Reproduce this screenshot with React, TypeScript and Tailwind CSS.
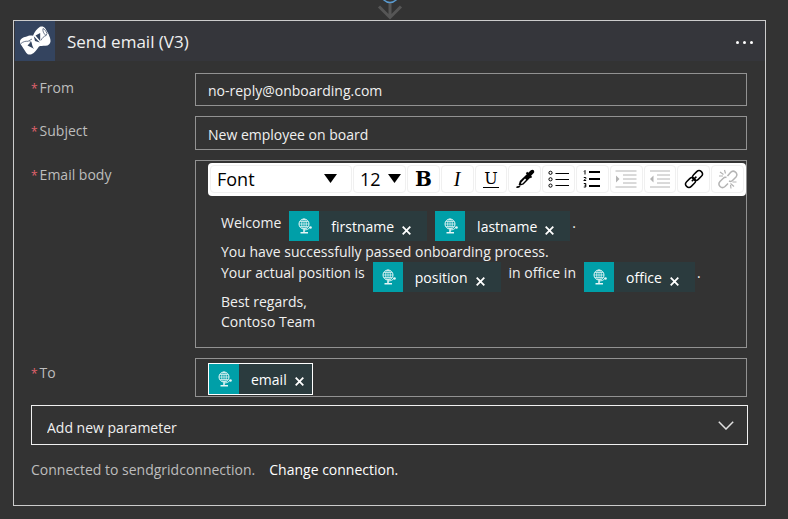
import type { ReactNode } from "react";

function Globe() {
  return (
    <svg viewBox="0 0 14 16" className="h-4 w-3.5" fill="none" stroke="#e6f6f6" strokeWidth="1" aria-hidden="true">
      <circle cx="6" cy="6" r="5" />
      <ellipse cx="6" cy="6" rx="2.3" ry="5" strokeWidth="0.8" />
      <path d="M1 6h10M2 3.500h8M2 8.500h8M6 1v10" strokeWidth="0.7" />
      <path d="M6 11.500v2.500M2.500 14.700h7.500" strokeWidth="1.500" />
      <path d="M6 12c3 0 5-1 6-3" strokeWidth="0.9" />
      <circle cx="12.500" cy="9.500" r="1.300" fill="#e6f6f6" stroke="none" />
    </svg>
  );
}

function Cross() {
  return (
    <svg viewBox="0 0 9 9" className="size-[9px]" stroke="#fff" strokeWidth="1.800" aria-hidden="true">
      <path d="M0.7 0.7l7.6 7.6M8.3 0.7L0.7 8.3" />
    </svg>
  );
}

function Token({ name, selected = false }: { name: string; selected?: boolean }) {
  return (
    <span
      contentEditable={false}
      className={
        "inline-flex shrink-0 items-stretch bg-[#2b3b3e] text-white " +
        (selected ? "h-8 border border-white pr-2" : "h-[30px] pr-4")
      }
    >
      <span className="flex w-[30px] items-center justify-center bg-[#009fa8] pl-[2px]">
        <Globe />
      </span>
      <span className="ml-3 self-center pt-[2px] leading-5">{name}</span>
      <button
        type="button"
        aria-label={"Remove " + name}
        className={"ml-2 flex items-center " + (selected ? "pt-1" : "pt-2")}
      >
        <Cross />
      </button>
    </span>
  );
}

function Label({ id, htmlFor, children }: { id?: string; htmlFor?: string; children: ReactNode }) {
  return (
    <label id={id} htmlFor={htmlFor} className="w-[164px] shrink-0 pt-[5px] leading-5 text-[#bdbdbd]">
      <span className="mr-[2px] text-xs leading-5 text-[#e0626c]">*</span>
      {children}
    </label>
  );
}

function Tool({ label, disabled = false, children }: { label: string; disabled?: boolean; children: ReactNode }) {
  return (
    <button
      type="button"
      aria-label={label}
      disabled={disabled}
      className="flex h-[28px] min-w-0 flex-1 items-center justify-center rounded-sm border border-[#f0f0f0] text-black disabled:text-[#b4b4b4]"
    >
      {children}
    </button>
  );
}

function Triangle({ className }: { className: string }) {
  return (
    <svg viewBox="0 0 13 9" className={"pointer-events-none absolute top-2 h-[9px] w-[13px] " + className} aria-hidden="true">
      <path d="M0 0h13L6.5 9z" fill="#000" />
    </svg>
  );
}

function Toolbar() {
  return (
    <div role="toolbar" aria-label="Formatting" className="flex h-[33px] items-center gap-px rounded-sm bg-white px-[2px] pb-[2px] text-black">
      <div className="relative h-[28px] w-[142px] shrink-0 rounded-sm border border-[#f0f0f0]">
        <select aria-label="Font" className="h-full w-full appearance-none bg-transparent pt-px pl-1.5 text-lg leading-6 outline-none">
          <option>Font</option>
        </select>
        <Triangle className="right-[14px]" />
      </div>
      <div className="relative h-[28px] w-[53px] shrink-0 rounded-sm border border-[#f0f0f0]">
        <select aria-label="Font size" className="h-full w-full appearance-none bg-transparent pt-px pl-1.5 text-lg leading-6 outline-none">
          <option>12</option>
        </select>
        <Triangle className="right-1" />
      </div>
      <Tool label="Bold">
        <span className="font-['DejaVu_Serif',serif] text-xl leading-6 font-bold">B</span>
      </Tool>
      <Tool label="Italic">
        <span className="font-['Liberation_Serif',serif] text-xl leading-6 italic">I</span>
      </Tool>
      <Tool label="Underline">
        <span className="border-b border-black px-px font-['DejaVu_Serif',serif] text-base leading-[17px]">U</span>
      </Tool>
      <Tool label="Text color">
        <svg viewBox="0 0 20 20" className="size-5" aria-hidden="true">
          <path d="M12.3 4.800l3.400 3.400-7.200 7.200-3.900 1.400-1-.8 1.200-3.900z" fill="#000" />
          <path d="M10 9.500l1.200 1.200-3.700 3.700-1.500.6.500-1.700z" fill="#fff" />
          <path d="M10.800 4.200l5 5 1.300-1.300-1-1.200 2.600-2.600c1.600-2-.6-4.400-2.800-2.800l-2.700 2.500-1-1z" fill="#000" />
          <path d="M.8 18.300c1.200-1.300 3-1.500 4.700-.8-1 1.500-3.200 1.800-4.700.8z" fill="#000" />
        </svg>
      </Tool>
      <Tool label="Bulleted list">
        <svg viewBox="0 0 22 18" className="h-[18px] w-[22px]" fill="none" stroke="currentColor" aria-hidden="true">
          <circle cx="2.500" cy="2.800" r="1.600" />
          <circle cx="2.500" cy="9.300" r="1.600" />
          <circle cx="2.500" cy="15.600" r="1.600" />
          <path d="M7.500 3.500h13.500M7.500 9.500h13.500M7.500 15.500h13.500" />
        </svg>
      </Tool>
      <Tool label="Numbered list">
        <svg viewBox="0 0 18 18" className="size-[18px]" fill="none" stroke="currentColor" aria-hidden="true">
          <path d="M6 2h11M6 9h11M6 16h11" strokeWidth="2" />
          <path d="M1 1.500l1-1v4M.8 7.500h2v1l-2 2h2.400M.8 13.500h2v3.500h-2M1.500 15.200h1.500" />
        </svg>
      </Tool>
      <Tool label="Indent" disabled>
        <svg viewBox="0 0 22 18" className="h-[18px] w-[22px]" fill="none" stroke="currentColor" aria-hidden="true">
          <path d="M.5 1h21M8 5h13.500M8 9h13.500M8 13h13.500M.5 17h21" />
          <path d="M1 5.500l3.500 3.500L1 12.500z" fill="currentColor" stroke="none" />
        </svg>
      </Tool>
      <Tool label="Outdent" disabled>
        <svg viewBox="0 0 22 18" className="h-[18px] w-[22px]" fill="none" stroke="currentColor" aria-hidden="true">
          <path d="M1 1h20M8 5h13M8 9h13M8 13h13M1 17h20" />
          <path d="M4.500 5.500L1 9l3.500 3.500z" fill="currentColor" stroke="none" />
        </svg>
      </Tool>
      <Tool label="Insert link">
        <svg viewBox="0 0 20 20" className="size-5" fill="none" stroke="currentColor" strokeWidth="1.500" aria-hidden="true">
          <rect x="8" y="3.200" width="11" height="6.600" rx="3.300" transform="rotate(-45 13.500 6.500)" />
          <rect x="1" y="10.200" width="11" height="6.600" rx="3.300" transform="rotate(-45 6.500 13.500)" />
          <path d="M7.800 12.200l4.600-4.600" />
        </svg>
      </Tool>
      <Tool label="Remove link" disabled>
        <svg viewBox="0 0 20 20" className="size-5" fill="none" stroke="currentColor" strokeWidth="1.500" aria-hidden="true">
          <path d="M9.500 7l3-3.500c3-3.500 8.500 1 5.500 4.500l-3.500 3.500c-1 1-2.500 1-3.500.5M8.500 8.500c-1-.5-2.500 0-3.200.8L2 12.500c-3 3.500 1.500 8 5 5l3-3" />
          <path d="M2 3l3.500 2.500M6.500 1l1 3.500M1 7h4M12.500 14.500l3.500 3M12.500 16l.5 3.500M14.500 13h4" strokeWidth="1.200" />
        </svg>
      </Tool>
    </div>
  );
}

function SendGridLogo() {
  return (
    <svg viewBox="0 0 40 40" className="size-10 shrink-0 bg-[#34445f]" aria-hidden="true">
      <path
        d="M5 20c.5-2.500 3-3.800 6-4.300 2.500-.7 4-1.500 7-1 1.500-3.500 4-7 7-8.900 2-.8 3.800-.4 5 1.200l3.500 6c1 2.500 2.300 5 2 7.500-.4 2.700-2 4-5 4.300-3 .2-5 0-6.500.7-2 3-4.500 6.500-7.500 7.700-2 .8-4 .3-5.300-1.500L6.500 24.500c-1-1.500-1.700-3-1.500-4.500z"
        fill="#fff"
      />
      <path d="M12.500 24.500l3.800-4 1.700 6.800zM18.800 15.200l6 6.300-4.800-1.500zM20.500 14.500l4.700 5.500v-8z" fill="#34445f" />
      <path d="M6 22.500c2-1.800 4.500-2.500 7-2.200l4-2.300M15 20c.5 3 1.500 5.500 3.500 7.500M28 7.500c-.5 2.500.5 5 3 7l1-2c-1-2.500-2.500-4.500-4-5zM31 14.500c-2 .8-4 2.500-5 4.800" stroke="#34445f" strokeWidth=".7" fill="none" />
    </svg>
  );
}

export default function App() {
  return (
    <main className="min-h-screen bg-[#333333] pr-[22px] pb-3 pl-[13px] font-['Open_Sans','Noto_Sans',sans-serif] text-sm text-[#f0f0f0]">
      <div className="flex h-5 justify-center">
        <svg viewBox="0 0 26 20" className="h-5 w-[26px]" fill="none" aria-hidden="true">
          <path d="M13 3v15M2 6.500l11 11 11-11" stroke="#565656" strokeWidth="3" />
          <circle cx="13" cy="-6" r="8.500" fill="#333" stroke="#5a9bd0" strokeWidth="1.500" />
        </svg>
      </div>
      <section className="border border-[#cccccc] pb-[25px]">
        <header className="flex h-10 items-center bg-[#35363b] pr-3 pl-px">
          <SendGridLogo />
          <h1 className="ml-3 flex-1 pt-px text-[17px] leading-6">Send email (V3)</h1>
          <button type="button" aria-label="More commands" className="flex h-6 items-center gap-1 pt-[3px]">
            <span className="size-[3px] rounded-full bg-white" />
            <span className="size-[3px] rounded-full bg-white" />
            <span className="size-[3px] rounded-full bg-white" />
          </button>
        </header>

        <form className="flex flex-col gap-[10px] pt-3 pr-[18px] pl-[17px]">
          <div className="flex">
            <Label htmlFor="from">From</Label>
            <input id="from" defaultValue="no-reply@onboarding.com" className="h-[33px] min-w-0 flex-1 border border-[#929292] bg-transparent px-3 pt-[2px] outline-none" />
          </div>
          <div className="flex">
            <Label htmlFor="subject">Subject</Label>
            <input id="subject" defaultValue="New employee on board" className="h-[34px] min-w-0 flex-1 border border-[#929292] bg-transparent px-3 pt-[2px] outline-none" />
          </div>
          <div className="flex">
            <Label id="body-label">Email body</Label>
            <div className="min-w-0 flex-1 border border-[#929292] pt-[2px] pb-[15px] pl-3">
              <Toolbar />
              <div
                role="textbox"
                aria-multiline="true"
                aria-labelledby="body-label"
                contentEditable
                suppressContentEditableWarning
                className="pt-[15px] pl-[13px] leading-5 whitespace-nowrap outline-none"
              >
                <div className="flex">
                  <span className="mr-2 pt-[2px]">Welcome</span>
                  <Token name="firstname" />
                  <span className="w-2" />
                  <Token name="lastname" />
                  <span className="ml-[2px] pt-[2px]">.</span>
                </div>
                <div className="pt-px">You have successfully passed onboarding process.</div>
                <div className="flex">
                  <span className="mr-2 pt-px">Your actual position is</span>
                  <Token name="position" />
                  <span className="mx-2 pt-px">in office in</span>
                  <Token name="office" />
                  <span className="ml-[2px] pt-px">.</span>
                </div>
                <div>Best regards,</div>
                <div>Contoso Team</div>
              </div>
            </div>
          </div>
          <div className="flex">
            <Label id="to-label">To</Label>
            <div
              role="textbox"
              aria-labelledby="to-label"
              contentEditable
              suppressContentEditableWarning
              className="flex h-[39px] min-w-0 flex-1 items-start border border-[#929292] px-3 pt-1 outline-none"
            >
              <Token name="email" selected />
            </div>
          </div>
        </form>

        <div className="relative mx-[17px] mt-2">
          <select aria-label="Add new parameter" className="block h-10 w-full appearance-none border border-[#f0f0f0] bg-transparent px-[15px] pt-1.5 outline-none">
            <option>Add new parameter</option>
          </select>
          <svg viewBox="0 0 16 9" className="pointer-events-none absolute top-4 right-[14px] h-[9px] w-4" fill="none" stroke="#e0e0e0" strokeWidth="1.500" aria-hidden="true">
            <path d="M.8.8L8 8 15.200.8" />
          </svg>
        </div>

        <p className="mt-[15px] ml-[17px] leading-5 text-[#bdbdbd]">
          Connected to sendgridconnection.
          <a href="#change" className="ml-3.5 text-white">Change connection.</a>
        </p>
      </section>
    </main>
  );
}
